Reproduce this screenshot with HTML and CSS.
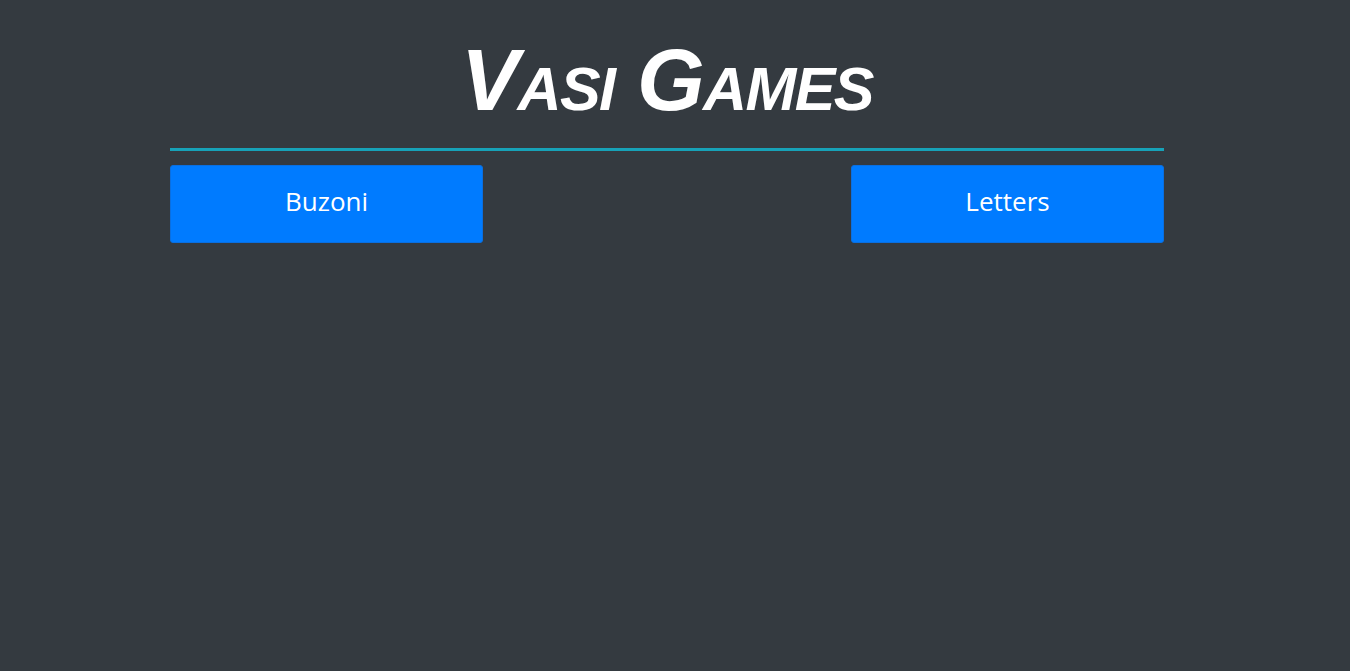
FILE: index.html
```html
<!DOCTYPE html>
<html>
<head>
<meta charset="utf-8">
<link rel="stylesheet" href="styles.css">
</head>
<body>
<div class="page">
  <header class="header">
    <h1 class="title">Vasi Games</h1>
  </header>
  <nav class="games">
    <a class="btn" href="#">Buzoni</a>
    <a class="btn" href="#">Letters</a>
  </nav>
</div>
</body>
</html>
```

FILE: styles.css
```css
html, body {
  margin: 0;
  padding: 0;
  background: #343a40;
  height: 100%;
}
.page {
  width: 994px;
  margin: 0 0 0 170px;
}
.header {
  border-bottom: 3px solid #17a2b8;
  height: 148px;
  display: flex;
  justify-content: center;
  align-items: flex-start;
}
.title {
  margin: 30px 0 0 0;
  font-family: "Liberation Sans", Arial, sans-serif;
  font-style: italic;
  font-weight: bold;
  font-variant: small-caps;
  font-size: 87px;
  letter-spacing: -1.6px;
  line-height: 100px;
  color: #fff;
}
.games {
  margin-top: 14px;
  display: flex;
  justify-content: space-between;
}
.btn {
  width: 313px;
  height: 78px;
  box-sizing: border-box;
  background: #007bff;
  border: 1px solid #0a6fe0;
  border-radius: 3px;
  color: #fff;
  text-decoration: none;
  font-family: "Open Sans", "Noto Sans", sans-serif;
  font-size: 26px;
  display: flex;
  justify-content: center;
  align-items: center;
  padding-bottom: 6px;
}
```
